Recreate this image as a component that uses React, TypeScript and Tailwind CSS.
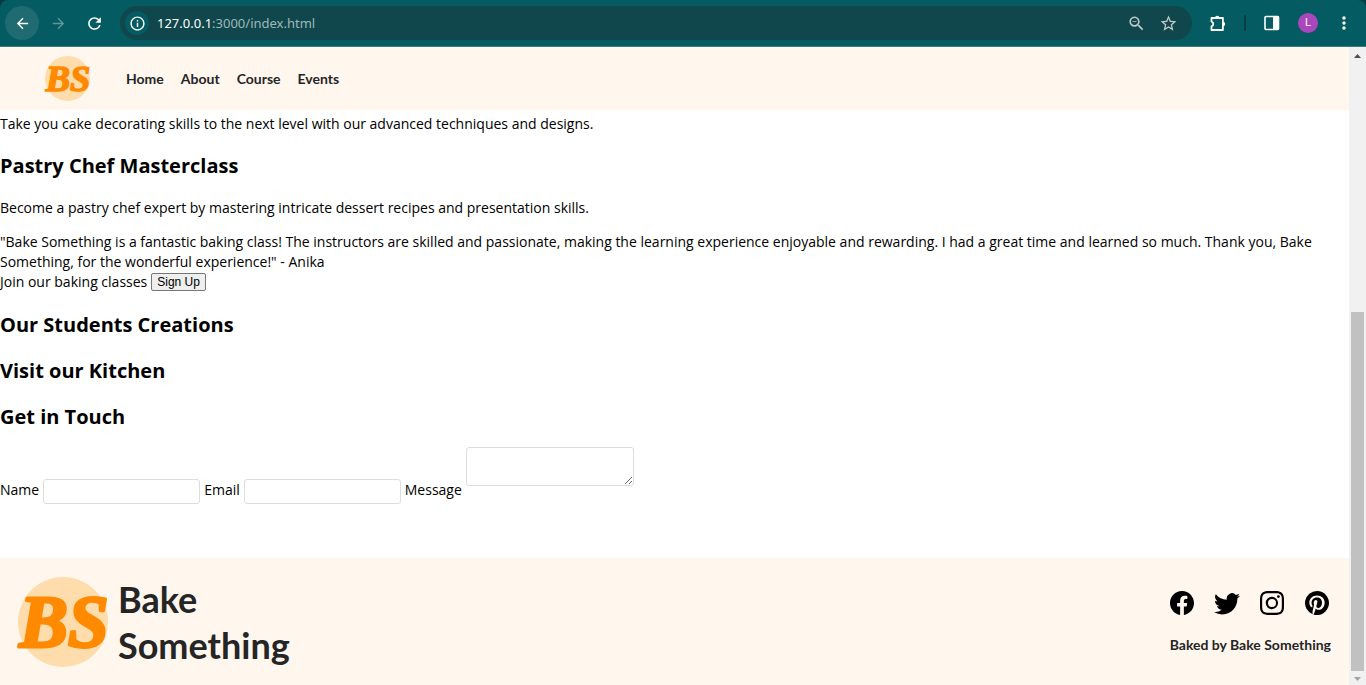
import type { ReactNode } from "react";
import { MdArrowBack, MdArrowForward, MdRefresh, MdInfoOutline, MdZoomOut, MdStarBorder, MdMoreVert } from "react-icons/md";
import { BsFacebook, BsTwitter, BsInstagram, BsPinterest } from "react-icons/bs";

function ToolButton({ label, className = "", children }: { label: string; className?: string; children: ReactNode }) {
  return (
    <button aria-label={label} className={"flex shrink-0 items-center justify-center rounded-full " + className}>
      {children}
    </button>
  );
}

function BrowserBar() {
  return (
    <div className="bg-[#043b40]">
      <div className="flex items-center rounded-t-lg border-b border-[#3a7c81] bg-[#045b61] px-[5px] py-1.5 text-white">
        <ToolButton label="Back" className="size-[34px] bg-[#1f6b71]"><MdArrowBack size={17} /></ToolButton>
        <ToolButton label="Forward" className="ml-0.5 size-[34px] text-[#5f979b]"><MdArrowForward size={17} /></ToolButton>
        <ToolButton label="Reload" className="ml-0.5 size-[34px]"><MdRefresh size={19} /></ToolButton>
        <div className="ml-[9px] flex h-[34px] grow items-center rounded-full bg-[#10474d] pl-[5px] pr-3 font-['Noto_Sans','Open_Sans',sans-serif] text-[13px]">
          <ToolButton label="Site information" className="size-6 bg-[#045b61]"><MdInfoOutline size={17} /></ToolButton>
          <span className="ml-2 grow text-[#9fb8ba]"><span className="text-white">127.0.0.1</span>:3000/index.html</span>
          <ToolButton label="Zoom" className="size-6 text-[#c3c9ca]"><MdZoomOut size={19} /></ToolButton>
          <ToolButton label="Bookmark" className="ml-2 size-6 text-[#c3c9ca]"><MdStarBorder size={19} /></ToolButton>
        </div>
        <ToolButton label="Extensions" className="ml-3.5 size-6">
          <svg width="18" height="18" viewBox="0 0 18 18" fill="currentColor">
            <path d="M2.5 4h11.4v12H2.5v-3.6a2.5 2.5 0 0 0 0-4.8z" fill="none" stroke="currentColor" strokeWidth="1.8" strokeLinejoin="round" />
            <path d="M6 4a2.2 2.2 0 0 1 4.4 0zM14 7.8a2.2 2.2 0 0 1 0 4.4z" />
          </svg>
        </ToolButton>
        <span className="ml-3.5 h-4 w-0.5 bg-[#0b3f45]" />
        <ToolButton label="Side panel" className="ml-3.5 size-6">
          <svg width="16" height="16" viewBox="0 0 16 16" fill="currentColor"><rect x="1" y="1.5" width="13.5" height="13" rx="1" fill="none" stroke="currentColor" strokeWidth="1.6" /><path d="M9 1h6v14H9z" /></svg>
        </ToolButton>
        <ToolButton label="Profile" className="ml-3.5 size-5 bg-[#ab47bc] font-['Roboto',sans-serif] text-[11px]">L</ToolButton>
        <ToolButton label="Menu" className="ml-3.5 size-6"><MdMoreVert size={20} /></ToolButton>
        <span className="w-[5px]" />
      </div>
    </div>
  );
}

function Logo({ className }: { className: string }) {
  return (
    <svg viewBox="0 0 90 90" role="img" aria-label="Bake Something" className={"overflow-visible " + className}>
      <circle cx="45" cy="45" r="45" fill="#ffdcab" />
      <text x="46" y="70" textAnchor="middle" fill="#ff8a00" stroke="#ff8a00" strokeWidth="3" strokeLinejoin="round" fontSize="73" fontWeight="700" fontStyle="italic" fontFamily="Liberation Serif, serif">BS</text>
    </svg>
  );
}

const links = ["Home", "About", "Course", "Events"];
const socials = [
  { name: "Facebook", Icon: BsFacebook },
  { name: "Twitter", Icon: BsTwitter },
  { name: "Instagram", Icon: BsInstagram },
  { name: "Pinterest", Icon: BsPinterest },
];

const heading = "text-xl leading-[30px] font-bold";
const field = "rounded-[3px] border border-[#dddddd] bg-white outline-none";

export default function App() {
  return (
    <div className="flex min-h-screen flex-col bg-white font-['Open_Sans','Noto_Sans',sans-serif] text-sm leading-5 text-black">
      <BrowserBar />
      <div className="flex grow">
        <div className="flex min-w-0 grow flex-col">
          <header className="flex items-center bg-[#fff6ee] py-[9px] pl-[45px] font-['Lato',sans-serif] font-bold text-[#252525]">
            <a href="#home"><Logo className="size-[45px]" /></a>
            <nav className="ml-9 flex gap-[17px]">
              {links.map((l) => <a key={l} href={"#" + l.toLowerCase()}>{l}</a>)}
            </nav>
          </header>
          <main className="grow pt-1">
            <p>Take you cake decorating skills to the next level with our advanced techniques and designs.</p>
            <h2 className={heading + " my-[17px]"}>Pastry Chef Masterclass</h2>
            <p>Become a pastry chef expert by mastering intricate dessert recipes and presentation skills.</p>
            <p className="mt-3.5 pr-4">"Bake Something is a fantastic baking class! The instructors are skilled and passionate, making the learning experience enjoyable and rewarding. I had a great time and learned so much. Thank you, Bake Something, for the wonderful experience!" - Anika</p>
            <div className="flex items-center gap-1">
              <span>Join our baking classes</span>
              <button className="rounded-xs border border-[#767676] bg-[#efefef] px-[5px] font-['Liberation_Sans',sans-serif] text-xs leading-4">Sign Up</button>
            </div>
            <div className="mt-[18px] flex flex-col gap-4">
              <h2 className={heading}>Our Students Creations</h2>
              <h2 className={heading}>Visit our Kitchen</h2>
              <h2 className={heading}>Get in Touch</h2>
            </div>
            <form className="mt-[15px] mb-[54px] flex items-end gap-1">
              <label htmlFor="name" className="mb-1">Name</label>
              <input id="name" className={field + " h-[25px] w-[157px] px-1"} />
              <label htmlFor="email" className="mb-1">Email</label>
              <input id="email" type="email" className={field + " h-[25px] w-[157px] px-1"} />
              <label htmlFor="message" className="mb-1">Message</label>
              <textarea id="message" className={field + " mb-[18px] h-[39px] w-[168px] resize px-1"} />
            </form>
          </main>
          <footer className="flex items-center justify-between bg-[#fff6ee] px-[18px] pt-[18px] pb-[17px] font-['Lato',sans-serif] font-bold text-[#252525]">
            <div className="flex items-center gap-2.5">
              <Logo className="size-[90px]" />
              <p className="text-4xl leading-[46px]">Bake<br />Something</p>
            </div>
            <div className="flex flex-col items-start gap-5 pt-0.5">
              <div className="flex gap-[21px] text-black">
                {socials.map(({ name, Icon }) => (
                  <a key={name} href={"#" + name.toLowerCase()} aria-label={name} className="flex size-6 items-center justify-center">
                    <Icon className={name === "Twitter" ? "size-[26px] shrink-0" : "size-6"} />
                  </a>
                ))}
              </div>
              <p>Baked by Bake Something</p>
            </div>
          </footer>
        </div>
        <div aria-hidden="true" className="flex w-[17px] shrink-0 flex-col items-center bg-[#f1f1f1]">
          <svg width="17" height="17" viewBox="0 0 17 17" fill="#505050"><path d="M5 11h7L8.5 7z" /></svg>
          <div className="grow-[248]" />
          <div className="w-[13px] grow-[358] bg-[#c1c1c1]" />
          <svg width="17" height="14" viewBox="0 2 17 14" fill="#a3a3a3"><path d="M5 8h7l-3.5 4z" /></svg>
        </div>
      </div>
    </div>
  );
}
